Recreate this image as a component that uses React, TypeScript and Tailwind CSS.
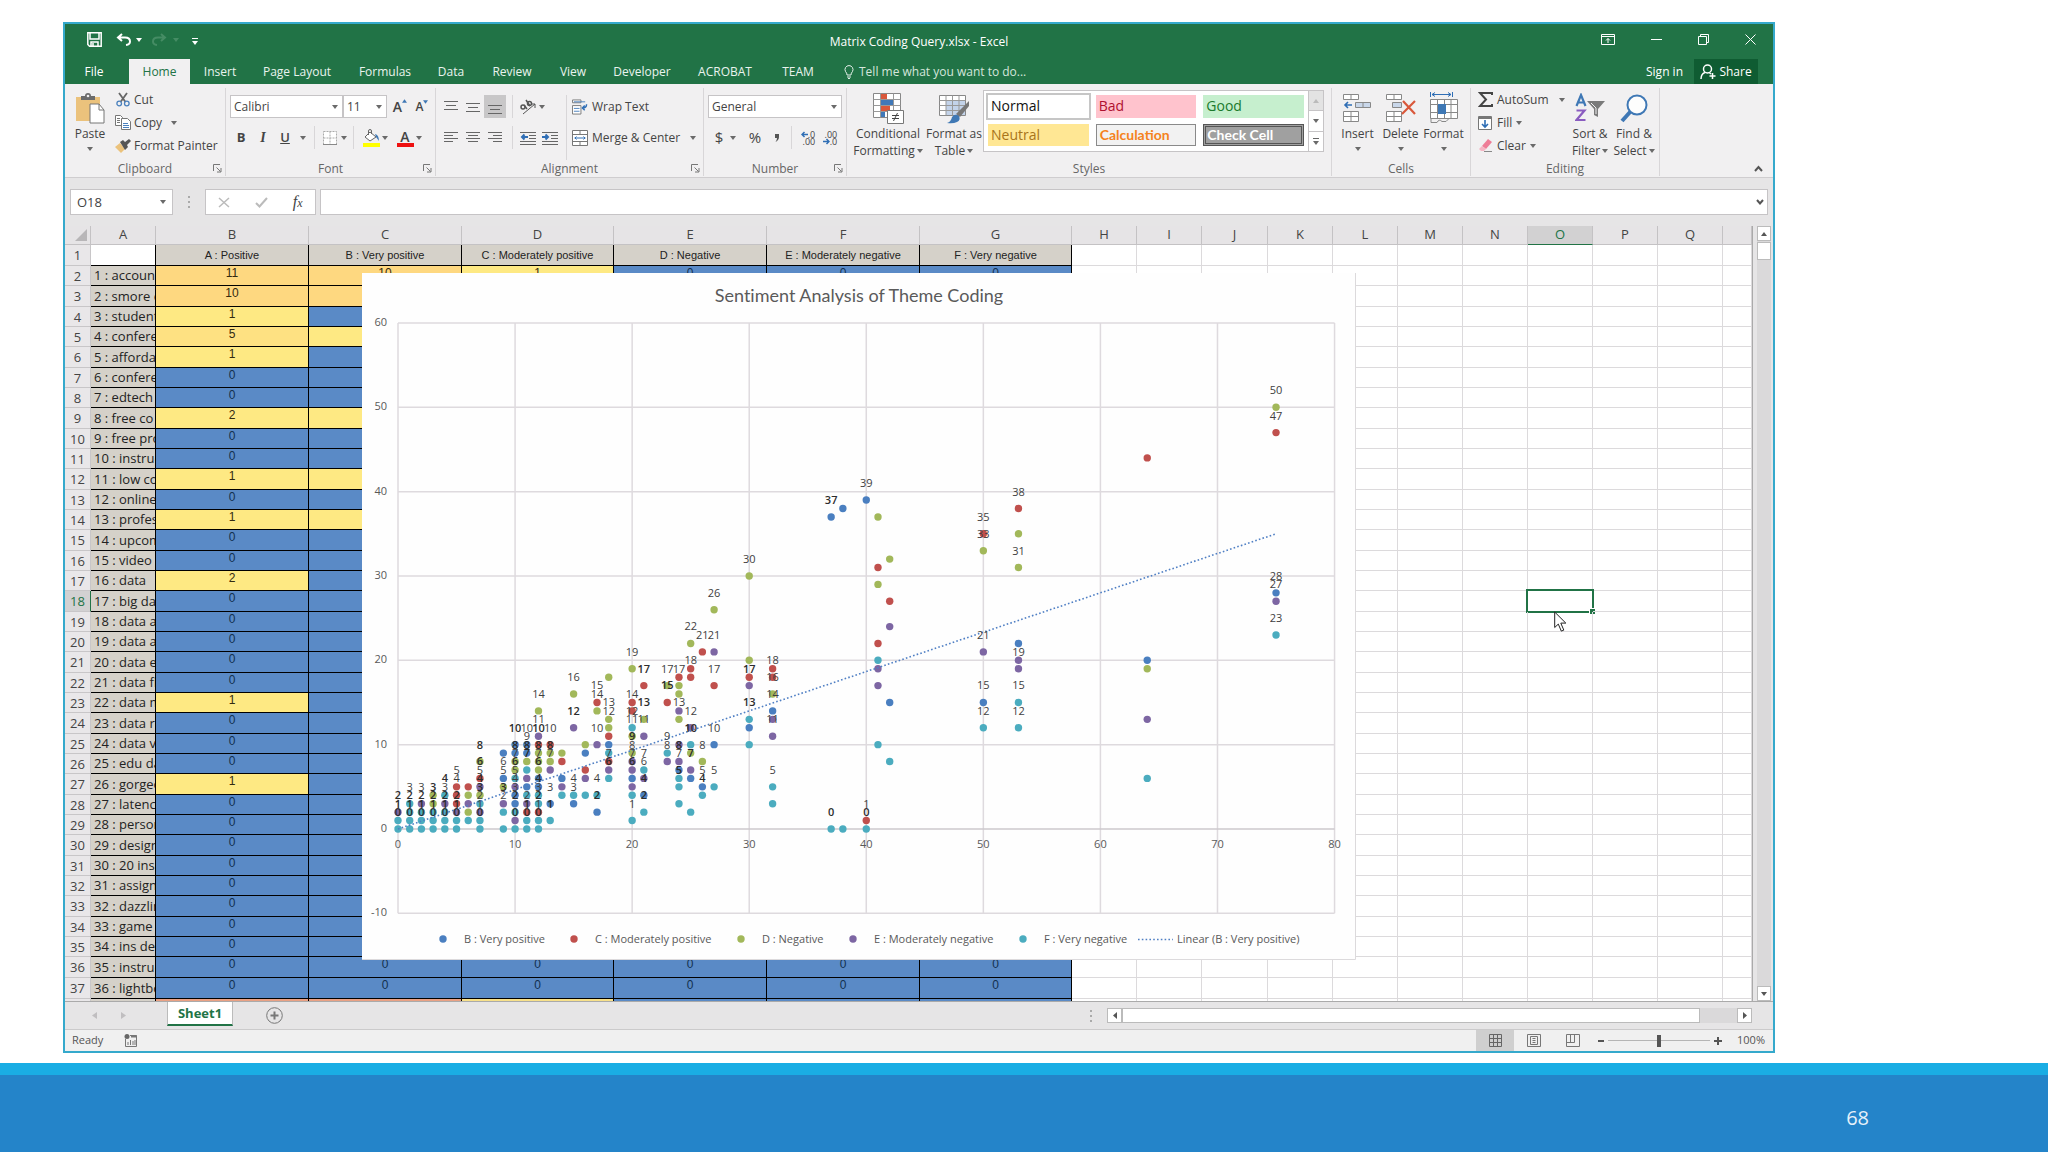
import React from "react";

/* ---------- data ---------- */

const RED = "#c0504d";
const GREEN = "#a2b85a";
const PURPLE = "#7d66a3";
const TEAL = "#4bacbf";
const BLUE = "#4a7fc0";

const COLORS: Record<string, string> = { R: RED, G: GREEN, P: PURPLE, T: TEAL, B: BLUE };

type Column = { x: number; dots: string; labels?: number[]; strong?: number[] };

const COLUMNS: Column[] = [
  { x: 0, dots: "T0 T1 P2", labels: [0, 1, 2], strong: [0, 1, 2] },
  { x: 1, dots: "T0 T1 T2 T3", labels: [0, 1, 2, 3], strong: [0, 1, 2] },
  { x: 2, dots: "T0 T1 T2 P3", labels: [0, 1, 2, 3], strong: [0, 1, 2] },
  { x: 3, dots: "T0 T1 T2 G3 G4", labels: [0, 1, 2, 3], strong: [0, 1, 2, 3] },
  { x: 4, dots: "T0 T1 T2 P3 T4", labels: [0, 1, 2, 3, 4], strong: [0, 1, 2, 4] },
  { x: 5, dots: "T0 T1 P2 R3 R4 R5", labels: [0, 1, 2, 4, 5], strong: [0, 1, 2] },
  { x: 6, dots: "T1 G2 P3 G4 R5" },
  { x: 7, dots: "T0 T1 P2 T3 G4 P5 R6 G8", labels: [0, 1, 2, 3, 4, 5, 6, 8], strong: [0, 3, 4, 6, 8] },
  { x: 9, dots: "T0 T2 P3 G5 B6 B9", labels: [2, 3, 5, 6], strong: [3] },
  { x: 10, dots: "T0 P1 T2 B3 B4 P5 T6 G7 G8 B9 B10", labels: [0, 2, 3, 4, 5, 6, 7, 8, 10], strong: [0, 2, 6, 8, 10] },
  { x: 11, dots: "T0 T1 R2 P3 T4 B5 P6 T7 G8 B9 B10", labels: [0, 1, 2, 7, 8, 9, 10], strong: [0, 1, 7, 8] },
  { x: 12, dots: "T0 T1 R2 T3 T4 B5 B6 G7 G8 G9 R10 P11 G14", labels: [0, 1, 2, 3, 4, 6, 7, 8, 10, 11, 14], strong: [0, 2, 4, 6, 8, 10] },
  { x: 13, dots: "T1 B3 P7 G8 G9 R10", labels: [1, 3, 7, 8, 10], strong: [1, 8] },
  { x: 14, dots: "T4 P5 B6 R8 G9" },
  { x: 15, dots: "B3 T4 P12 G16", labels: [3, 4, 12, 16], strong: [12] },
  { x: 16, dots: "T4 P6 R7 B9 G10" },
  { x: 17, dots: "B2 T4 P10 G14 R15", labels: [2, 4, 10, 14, 15], strong: [2] },
  { x: 18, dots: "T6 P7 R8 T9 B10 R11 G12 G13 G18", labels: [6, 7, 12, 13], strong: [6] },
  { x: 20, dots: "T1 T4 P5 B6 P7 P8 G9 G11 T12 R14 R15 G19", labels: [1, 6, 7, 8, 9, 11, 12, 14, 19], strong: [6, 9] },
  { x: 21, dots: "T2 B4 P6 T7 P11 G13 R17", labels: [2, 4, 6, 7, 11, 13, 17], strong: [2, 4, 13, 17] },
  { x: 23, dots: "P8 T9 R15 G17", labels: [8, 9, 15, 17], strong: [15] },
  { x: 24, dots: "T3 T5 T6 B7 P8 P10 G13 P14 G16 G17 R18", labels: [5, 7, 8, 13, 17], strong: [5, 8] },
  { x: 25, dots: "T2 B6 P7 G9 T10 P12 R18 R19 G22", labels: [7, 10, 12, 18, 22], strong: [7, 10] },
  { x: 26, dots: "T4 B5 G8 R21", labels: [4, 5, 8, 21], strong: [4] },
  { x: 27, dots: "T5 B10 P21 R17 G26", labels: [5, 10, 17, 21, 26] },
  { x: 30, dots: "T10 B12 T13 P17 R18 G20 G30", labels: [13, 17, 30], strong: [13, 17] },
  { x: 32, dots: "T3 T5 P11 P13 B14 G16 R18 R19", labels: [5, 11, 14, 16, 18] },
  { x: 37, dots: "T0 B37", labels: [0, 37], strong: [0, 37] },
  { x: 38, dots: "T0 B38" },
  { x: 40, dots: "T0 R1 B39", labels: [0, 1, 39], strong: [0] },
  { x: 41, dots: "T10 P17 P19 T20 R22 G29 R31 G37" },
  { x: 42, dots: "T8 B15 P24 R27 G32" },
  { x: 50, dots: "T12 B15 P21 G33 R35", labels: [12, 15, 21, 33, 35] },
  { x: 53, dots: "T12 T15 P19 P20 B22 G31 G35 R38", labels: [12, 15, 19, 31, 38] },
  { x: 64, dots: "T6 P13 G19 B20 R44" },
  { x: 75, dots: "T23 P27 B28 R47 G50", labels: [23, 27, 28, 47, 50] },
];

const THEMES = [
  "accounts", "smore cost", "students", "conference", "affordable", "conferences", "edtech", "free co",
  "free products", "instruction", "low cost", "online", "professional", "upcoming", "video", "data", "big data",
  "data analysis", "data analytics", "data export", "data files", "data mining", "data report", "data viz",
  "edu data", "gorgeous", "latency", "personal", "design", "20 ins", "assignment", "dazzling", "game",
  "ins design", "instruct", "lightbox",
];

const POSITIVE: Record<number, number> = { 2: 11, 3: 10, 4: 1, 5: 5, 6: 1, 9: 2, 12: 1, 14: 1, 17: 2, 23: 1, 27: 1 };
const VERY_POSITIVE: Record<number, number> = { 2: 10, 3: 10, 5: 1, 9: 1, 12: 1, 14: 1 };

const LETTERS = ["A", "B", "C", "D", "E", "F", "G", "H", "I", "J", "K", "L", "M", "N", "O", "P", "Q", ""];
const WIDTHS = [
  "w-[65px]", "w-[153px]", "w-[153px]", "w-[152px]", "w-[153px]", "w-[153px]", "w-[152px]",
  "w-[65px]", "w-[65px]", "w-[66px]", "w-[65px]", "w-[65px]", "w-[65px]", "w-[65px]", "w-[65px]", "w-[65px]", "w-[65px]", "",
];
const HEADINGS = ["A : Positive", "B : Very positive", "C : Moderately positive", "D : Negative", "E : Moderately negative", "F : Very negative"];

function fill(v: number) {
  if (v >= 10) return "bg-[#fed880]";
  if (v >= 5) return "bg-[#fee182]";
  if (v > 0) return "bg-[#fee983]";
  return "bg-[#5a8ac6]";
}

/* ---------- small pieces ---------- */

function Caret({ className = "text-[#6a6a6a]" }: { className?: string }) {
  return (
    <svg width="6" height="4" viewBox="0 0 6 4" className={`shrink-0 ${className}`} aria-hidden="true">
      <path d="M0 0h6L3 4z" fill="currentColor" />
    </svg>
  );
}

function Launcher({ name }: { name: string }) {
  return (
    <button aria-label={name} className="absolute right-[3px] bottom-[3px]">
      <svg width="9" height="9" viewBox="0 0 9 9" fill="none" stroke="#777" aria-hidden="true">
        <path d="M.5 7V.5H7M3.500 3.500L7.500 7.500M8 4v4H4" />
      </svg>
    </button>
  );
}

function Group({ label, width, launcher, children }: { label: string; width: string; launcher?: boolean; children: React.ReactNode }) {
  return (
    <section aria-label={label} className={`relative mt-1 mb-px flex shrink-0 flex-col border-r border-[#d8d6d8] ${width}`}>
      <div className="flex flex-1">{children}</div>
      <div className="h-[16px] text-center text-[12px] leading-[18px] text-[#666]">{label}</div>
      {launcher && <Launcher name={`${label} settings`} />}
    </section>
  );
}

function Sep() {
  return <span className="h-[23px] w-px shrink-0 bg-[#d8d6d8]" />;
}

function BigButton({ icon, lines, width, below }: { icon: React.ReactNode; lines: string[]; width: string; below?: boolean }) {
  return (
    <button className={`flex shrink-0 flex-col items-center pt-[3px] ${width}`}>
      <span className="flex h-[34px] items-center">{icon}</span>
      {lines.map((l, i) => (
        <span key={l} className="flex h-[17px] items-center gap-[2px] whitespace-nowrap text-[12px] leading-[17px]">
          {l}
          {!below && i === lines.length - 1 && <Caret />}
        </span>
      ))}
      {below && <span className="flex h-[14px] items-center"><Caret /></span>}
    </button>
  );
}

function SmallButton({ icon, label, caret, gap = "gap-1" }: { icon: React.ReactNode; label: string; caret?: boolean; gap?: string }) {
  return (
    <button className={`flex h-[23px] items-center whitespace-nowrap text-[12px] ${gap}`}>
      <span className="flex w-4 justify-center">{icon}</span>
      <span>{label}</span>
      {caret && <Caret />}
    </button>
  );
}

function Lines({ spec, blue }: { spec: [number, number, number][]; blue?: string }) {
  return (
    <svg width="16" height="14" viewBox="0 0 16 14" aria-hidden="true">
      {spec.map(([x, y, w]) => <rect key={`${x}-${y}`} x={x} y={y} width={w} height="1" fill="#666" />)}
      {blue && <path d={blue} fill="none" stroke="#2f6eb5" strokeWidth="2" />}
    </svg>
  );
}

function Tool({ label, children, className = "" }: { label: string; children: React.ReactNode; className?: string }) {
  return (
    <button aria-label={label} className={`flex h-[23px] w-[22px] shrink-0 items-center justify-center ${className}`}>
      {children}
    </button>
  );
}

/* ---------- icons ---------- */

const PasteIcon = () => (
  <svg width="30" height="31" viewBox="0 0 30 31" aria-hidden="true">
    <path d="M1 4h24v24H1z" fill="#ebc27c" />
    <path d="M6 7V3h4a3 3 0 0 1 6 0h4v4z" fill="#6b6b6b" />
    <circle cx="13" cy="3" r="1.300" fill="#f1f0f1" />
    <path d="M15 11h9l5 6v13H15z" fill="#fff" stroke="#777" />
    <path d="M24 11v6h5" fill="none" stroke="#777" />
  </svg>
);
const CutIcon = () => (
  <svg width="14" height="15" viewBox="0 0 14 15" fill="none" aria-hidden="true">
    <path d="M3 1l6.500 9M11 1L4.500 10" stroke="#666" strokeWidth="1.800" />
    <circle cx="3.200" cy="11.500" r="2.300" stroke="#4a80bd" strokeWidth="1.300" />
    <circle cx="10.800" cy="11.500" r="2.300" stroke="#4a80bd" strokeWidth="1.300" />
  </svg>
);
const CopyIcon = () => (
  <svg width="16" height="15" viewBox="0 0 16 15" fill="#fff" stroke="#777" aria-hidden="true">
    <path d="M.5.5h5l2 2v8h-7z" />
    <path d="M6.500 3.500h6l3 3v8h-9z" />
    <path d="M2 3.500h3M2 5.500h3M2 7.500h3" />
    <path d="M8 8.500h5M8 10.500h6M8 12.500h6" stroke="#4a80bd" />
  </svg>
);
const PainterIcon = () => (
  <svg width="16" height="14" viewBox="0 0 16 14" aria-hidden="true">
    <path d="M0 8l5-4 5 6-4 4z" fill="#ebc27c" />
    <path d="M5 3l3-2 2 2 4-3 2 2-4 4 1 2-3 3z" fill="#555" />
  </svg>
);
const BorderIcon = () => (
  <svg width="14" height="14" viewBox="0 0 14 14" fill="#fff" stroke="#aaa" aria-hidden="true">
    <path d="M.5.5h13v13H.5zM7 .5v13M.5 7h13" strokeDasharray="2 1" />
    <path d="M0 13.500h14" stroke="#888" />
  </svg>
);
const BucketIcon = () => (
  <svg width="17" height="18" viewBox="0 0 17 18" aria-hidden="true">
    <path d="M7 3l6 5-6 4-5-4z" fill="#fff" stroke="#666" />
    <path d="M5.500 6V2a1.500 1.500 0 0 1 3 0v3" fill="none" stroke="#666" />
    <path d="M12 5q4 1 4 7l-3-4z" fill="#3f78b5" />
    <rect x="0" y="14" width="17" height="4" fill="#ffff00" />
  </svg>
);
const WrapIcon = () => (
  <svg width="17" height="16" viewBox="0 0 17 16" fill="none" stroke="#777" aria-hidden="true">
    <path d="M.5.500h9v3h-9zM.5 6.500h9v9h-9z" fill="#fff" />
    <path d="M2 2.500h12" stroke="#4a80bd" />
    <path d="M2 9.500h6M2 12.500h6" stroke="#4a80bd" />
    <path d="M15.500 5q0 4-4 4M13.500 6.500L11 9l2.500 2.500" stroke="#2f6eb5" strokeWidth="1.500" />
  </svg>
);
const MergeIcon = () => (
  <svg width="16" height="16" viewBox="0 0 16 16" fill="none" stroke="#777" aria-hidden="true">
    <path d="M.5.500h15v15H.5zM.5 4.500h15M.5 11.500h15M8 .5v4M8 11.500v4" fill="#fff" />
    <path d="M2.500 8h11M4.500 6.500L3 8l1.500 1.500M11.500 6.500L13 8l-1.500 1.500" stroke="#2f6eb5" />
  </svg>
);
const CondIcon = () => (
  <svg width="31" height="31" viewBox="0 0 31 31" aria-hidden="true">
    <path d="M.5.500h27v24H.5z" fill="#fff" stroke="#888" />
    <path d="M.5 6.500h27M.5 12.500h27M.5 18.500h27M7.500.5v24M20.500.5v24" stroke="#999" />
    <path d="M8 1h6v5H8zM8 13h9v5H8z" fill="#d9583b" />
    <path d="M8 7h12v5H8zM8 19h4v5H8z" fill="#4078b8" />
    <path d="M14.500 17.500h16v13h-16z" fill="#fff" stroke="#777" />
    <path d="M19 22.500h7M19 25.500h7M24.500 20l-4 8" stroke="#444" fill="none" />
  </svg>
);
const TableIcon = () => (
  <svg width="31" height="31" viewBox="0 0 31 31" aria-hidden="true">
    <path d="M.5 2.500h26v20H.5z" fill="#fff" stroke="#888" />
    <path d="M7 8h19v14H7z" fill="#c3d3ea" />
    <path d="M.5 7.500h26M.5 12.500h26M.5 17.500h26M7 2.500v20M13.500 2.500v20M20 2.500v20" stroke="#999" />
    <path d="M30 8v5l-9 11-4-3z" fill="#777" />
    <path d="M8 30q4-1 5-6 3-4 7-1 2 4-2 6-4 2-10 1z" fill="#3f78b5" />
  </svg>
);
const InsertIcon = ({ del }: { del?: boolean }) => (
  <svg width="30" height="30" viewBox="0 0 30 30" fill="#fff" stroke="#888" aria-hidden="true">
    <path d="M.5 1.500h15v5H.5zM8 1.500v5M.5 18.500h15v10H.5zM8 18.500v10M.5 23.500h15" />
    {del ? (
      <>
        <path d="M6.500 9.500h9v5h-9z" fill="#c9d7ea" />
        <path d="M17 8l12 13M29 8L16 21" stroke="#d9583b" strokeWidth="2.200" />
      </>
    ) : (
      <>
        <path d="M12.500 9.500h15v5h-15zM20 9.500v5" fill="#c9d7ea" />
        <path d="M9 12H2M5 9l-3 3 3 3" fill="none" stroke="#2f6eb5" strokeWidth="1.600" />
      </>
    )}
  </svg>
);
const FormatIcon = () => (
  <svg width="30" height="32" viewBox="0 0 30 32" fill="none" stroke="#888" aria-hidden="true">
    <path d="M1.500 0v5M23.500 0v5M3 2.500h19M6 .5l-3 2 3 2M19 .5l3 2-3 2" stroke="#2f6eb5" />
    <path d="M1.500 7.500h27v19h-27z" fill="#fff" />
    <path d="M1.500 12.500h27M1.500 20.500h27M8.500 7.500v19M15.500 7.500v19M22 7.500v19M2 26.500v4h6q2-4 5-1h4l3-3" />
    <rect x="9" y="12" width="8" height="10" fill="#3f78b5" stroke="none" />
  </svg>
);
const SortIcon = () => (
  <svg width="30" height="30" viewBox="0 0 30 30" fill="none" aria-hidden="true">
    <path d="M1.500 13L6 2l4.500 11M3 9.500h6" stroke="#3f78b5" strokeWidth="2.200" />
    <path d="M1.500 17.500h8L1.500 27h9" stroke="#8a5cc0" strokeWidth="2.200" />
    <path d="M12 8h18l-7 8v8l-4-2v-6z" fill="#7a7a7a" />
    <path d="M16 10l5 5v6" stroke="#f1f0f1" />
  </svg>
);
const FindIcon = () => (
  <svg width="28" height="29" viewBox="0 0 28 29" fill="none" aria-hidden="true">
    <path d="M11 17L2 27" stroke="#3f78b5" strokeWidth="4" />
    <circle cx="17" cy="11" r="9.500" stroke="#3f78b5" strokeWidth="2" fill="#fdfdfd" />
  </svg>
);

/* ---------- chart ---------- */

const px = (x: number) => 36 + x * 11.707;
const py = (y: number) => 556 - y * 8.434;

const LEGEND: [number, string, string][] = [
  [81, BLUE, "B : Very positive"],
  [212, RED, "C : Moderately positive"],
  [379, GREEN, "D : Negative"],
  [491, PURPLE, "E : Moderately negative"],
  [661, TEAL, "F : Very negative"],
];

function Chart() {
  return (
    <svg width="994" height="687" viewBox="0 0 994 687" role="img" aria-label="Sentiment Analysis of Theme Coding" className="block font-['Open_Sans',sans-serif]">
      <rect width="994" height="687" fill="#fefefe" />
      <path d="M993.500 0V686.500H0" fill="none" stroke="#dcdadc" />
      <text x="497" y="29" textAnchor="middle" className="fill-[#5a5a5a] font-['Lato',sans-serif] text-[18px] [font-variant-ligatures:none]">Sentiment Analysis of Theme Coding</text>
      {[0, 10, 20, 30, 40, 50, 60, 70, 80].map((v) => (
        <g key={v}>
          <line x1={px(v)} x2={px(v)} y1={py(60)} y2={py(-10)} stroke="#dedade" strokeWidth="1.500" />
          <text x={px(v)} y="575" textAnchor="middle" className="fill-[#595959] text-[11px]">{v}</text>
        </g>
      ))}
      {[-10, 0, 10, 20, 30, 40, 50, 60].map((v) => (
        <g key={v}>
          <line x1={px(0)} x2={px(80)} y1={py(v)} y2={py(v)} stroke={v === 0 ? "#cdc9cd" : "#dedade"} strokeWidth="1.500" />
          <text x="25" y={py(v) + 3} textAnchor="end" className="fill-[#595959] text-[11px]">{v}</text>
        </g>
      ))}
      {COLUMNS.map((c) =>
        c.dots.split(" ").map((d) => (
          <circle key={`${c.x}${d}`} cx={px(c.x)} cy={py(Number(d.slice(1)))} r="3.700" fill={COLORS[d[0]]} />
        )),
      )}
      <line x1={px(0)} y1={py(0)} x2={px(75)} y2={py(35)} stroke="#4f7fc4" strokeWidth="1.600" strokeDasharray="1.600 2.200" />
      {COLUMNS.map((c) =>
        (c.labels ?? []).map((v) => (
          <text
            key={`${c.x}-${v}`}
            x={px(c.x)}
            y={py(v) - 13}
            textAnchor="middle"
            className={c.strong?.includes(v) ? "fill-[#2c2c2c] text-[11px] font-semibold" : "fill-[#404040] text-[11px]"}
          >
            {v}
          </text>
        )),
      )}
      {LEGEND.map(([x, color, label]) => (
        <g key={label}>
          <circle cx={x} cy="666" r="3.700" fill={color} />
          <text x={x + 21} y="670" className="fill-[#595959] text-[11px]">{label}</text>
        </g>
      ))}
      <line x1="776" x2="811" y1="666.500" y2="666.500" stroke="#4f7fc4" strokeWidth="1.600" strokeDasharray="1.600 2.200" />
      <text x="815" y="670" className="fill-[#595959] text-[11px]">Linear (B : Very positive)</text>
    </svg>
  );
}

/* ---------- sheet ---------- */

function Sheet() {
  return (
    <div className="relative min-w-0 flex-1 overflow-hidden border-r border-[#aaa] bg-white">
      <table className="w-full table-fixed border-separate border-spacing-0">
        <colgroup>
          <col className="w-[26px]" />
          {WIDTHS.map((w, i) => <col key={i} className={w} />)}
        </colgroup>
        <thead>
          <tr>
            <th className="h-[19px] border-r border-b border-[#c4c2c4] bg-[#e6e4e6] p-0">
              <svg width="12" height="12" viewBox="0 0 12 12" className="ml-auto mr-[3px]" aria-hidden="true"><path d="M12 0v12H0z" fill="#b8b6b8" /></svg>
            </th>
            {LETTERS.map((l, i) => (
              <th
                key={i}
                scope="col"
                className={`h-[19px] border-r border-b p-0 text-[13px] leading-[16px] font-normal align-top ${
                  l === "O" ? "border-r-[#c4c2c4] border-b-[#217346] bg-[#d2d1d2] text-[#217346]" : "border-[#c4c2c4] bg-[#e6e4e6] text-[#444]"
                }`}
              >
                {l}
              </th>
            ))}
          </tr>
        </thead>
        <tbody>
          <tr>
            <th scope="row" className="h-[21px] border-r border-b border-[#c8c6c8] bg-[#e9e7e9] p-0 text-[13px] leading-[19px] font-normal text-[#444]">1</th>
            <td className="border-r border-b border-black bg-white p-0" />
            {HEADINGS.map((h) => (
              <td key={h} className="border-r border-b border-black bg-[#d5d1c9] p-0 text-center font-['Liberation_Sans',sans-serif] text-[11px] leading-[20px] whitespace-nowrap text-[#222]">{h}</td>
            ))}
            {WIDTHS.slice(7).map((_, i) => <td key={i} className="border-r border-b border-[#dcdadc] p-0" />)}
          </tr>
          {THEMES.map((name, i) => {
            const row = i + 2;
            const h = i % 3 === 1 || i === 35 ? "h-[21px]" : "h-[20px]";
            const selected = row === 18;
            const values = [
              POSITIVE[row] ?? 0,
              VERY_POSITIVE[row] ?? 0,
              row === 2 ? 1 : 0, 0, 0, 0,
            ];
            return (
              <tr key={row}>
                <th
                  scope="row"
                  className={`${h} border-r border-b p-0 text-[13px] leading-[18px] font-normal ${
                    selected ? "border-r-[#217346] border-b-[#c8c6c8] bg-[#d2d1d2] text-[#217346]" : "border-[#c8c6c8] bg-[#e9e7e9] text-[#444]"
                  }`}
                >
                  {row}
                </th>
                <td className="overflow-hidden border-r border-b border-black bg-[#d5d1c9] p-0 pl-[3px] text-[13px] leading-[19px] whitespace-nowrap text-[#222]">
                  {`${i + 1} : ${name}`}
                </td>
                {values.map((v, c) => (
                  <td key={c} className={`border-r border-b border-black p-0 text-center align-top font-['Liberation_Sans',sans-serif] text-[12px] leading-[14px] ${fill(v)} ${v ? "text-[#332a10]" : "text-[#12304f]"}`}>
                    {v}
                  </td>
                ))}
                {WIDTHS.slice(7).map((_, c) => (
                  <td key={c} className="relative border-r border-b border-[#dcdadc] p-0">
                    {selected && c === 7 && (
                      <>
                        <span className="absolute -inset-[2px] border-2 border-[#217346]" />
                        <span className="absolute -right-[3px] -bottom-[3px] size-[6px] border-t border-l border-white bg-[#217346]" />
                        <svg width="13" height="21" viewBox="0 0 13 21" className="absolute top-[20px] left-[26px] z-10" aria-hidden="true">
                          <path d="M.7 1v15.500l3.600-3.400 3 7 2.500-1-3-7h5z" fill="#fff" stroke="#222" />
                        </svg>
                      </>
                    )}
                  </td>
                ))}
              </tr>
            );
          })}
          <tr aria-hidden="true">
            <td className="h-[2px] border-r border-[#c8c6c8] bg-[#e9e7e9] p-0" />
            <td className="border-r border-black bg-[#d5d1c9] p-0" />
            <td className="border-r border-black bg-[#e9a184] p-0" />
            <td className="border-r border-black bg-[#e9a184] p-0" />
            <td className="border-r border-black bg-[#f7e08a] p-0" />
            <td className="border-r border-black bg-[#5a8ac6] p-0" />
            <td className="border-r border-black bg-[#5a8ac6] p-0" />
            <td className="border-r border-black bg-[#5a8ac6] p-0" />
            {WIDTHS.slice(7).map((_, c) => <td key={c} className="border-r border-[#dcdadc] p-0" />)}
          </tr>
        </tbody>
      </table>
      <div className="absolute top-[47px] left-[297px]"><Chart /></div>
    </div>
  );
}

/* ---------- ribbon ---------- */

const TABS: [string, string][] = [
  ["Insert", "w-[60px]"], ["Page Layout", "w-[94px]"], ["Formulas", "w-[82px]"], ["Data", "w-[50px]"], ["Review", "w-[72px]"],
  ["View", "w-[50px]"], ["Developer", "w-[88px]"], ["ACROBAT", "w-[78px]"], ["TEAM", "w-[68px]"],
];

function Combo({ label, value, width }: { label: string; value: string; width: string }) {
  return (
    <span className={`relative flex shrink-0 items-center ${width}`}>
      <select aria-label={label} className="h-[23px] w-full appearance-none border border-[#c6c4c6] bg-white pl-[3px] text-[12px] text-[#444]">
        <option>{value}</option>
      </select>
      <span className="pointer-events-none absolute right-[5px]"><Caret /></span>
    </span>
  );
}

function Ribbon() {
  return (
    <div className="flex h-[94px] border-b border-[#cfcdcf] bg-[#f1f0f1] text-[#444]">
      <Group label="Clipboard" width="w-[161px]" launcher>
        <BigButton icon={<PasteIcon />} lines={["Paste"]} width="w-[50px]" below />
        <div className="flex flex-col">
          <SmallButton icon={<CutIcon />} label="Cut" gap="gap-[3px]" />
          <SmallButton icon={<CopyIcon />} label="Copy" caret gap="gap-[3px] [&>svg]:ml-[6px]" />
          <SmallButton icon={<PainterIcon />} label="Format Painter" gap="gap-[3px]" />
        </div>
      </Group>

      <Group label="Font" width="w-[210px]" launcher>
        <div className="flex flex-col gap-2 pt-[7px] pl-[4px]">
          <div className="flex items-center">
            <Combo label="Font" value="Calibri" width="w-[113px]" />
            <Combo label="Font size" value="11" width="w-[44px]" />
            <Tool label="Increase font size" className="ml-[2px]"><span className="flex text-[14px] font-semibold">A<svg width="5" height="4" viewBox="0 0 6 4" className="mt-[3px]"><path d="M0 4h6L3 0z" fill="#3f78b5" /></svg></span></Tool>
            <Tool label="Decrease font size"><span className="flex text-[12px] font-semibold">A<svg width="5" height="4" viewBox="0 0 6 4" className="mt-[2px]"><path d="M0 0h6L3 4z" fill="#3f78b5" /></svg></span></Tool>
          </div>
          <div className="flex items-center">
            <Tool label="Bold"><b className="text-[13px]">B</b></Tool>
            <Tool label="Italic"><i className="font-['Liberation_Serif',serif] text-[14px] font-bold">I</i></Tool>
            <Tool label="Underline"><span className="text-[13px] font-semibold underline">U</span></Tool>
            <Tool label="Underline options" className="-ml-1 w-[18px]"><Caret /></Tool>
            <Sep />
            <Tool label="Borders" className="ml-1"><BorderIcon /></Tool>
            <Caret />
            <span className="w-[6px]" />
            <Sep />
            <Tool label="Fill colour" className="ml-[6px]"><BucketIcon /></Tool>
            <Caret />
            <Tool label="Font colour" className="ml-[6px]">
              <span className="flex h-[18px] w-[17px] justify-center border-b-4 border-[#ee1111] text-[14px] leading-[15px] font-semibold">A</span>
            </Tool>
            <Caret />
          </div>
        </div>
      </Group>

      <Group label="Alignment" width="w-[268px]" launcher>
        <div className="flex gap-[5px] pt-[7px] pl-[4px]">
          <div className="flex flex-col gap-2">
            <div className="flex items-center">
              <Tool label="Top align"><Lines spec={[[1, 1, 14], [3, 5, 10], [1, 9, 14]]} /></Tool>
              <Tool label="Middle align"><Lines spec={[[1, 3, 14], [3, 7, 10], [1, 11, 14]]} /></Tool>
              <Tool label="Bottom align" className="bg-[#c8c7c8]"><Lines spec={[[1, 5, 14], [3, 9, 10], [1, 13, 14]]} /></Tool>
              <span className="w-[6px]" />
              <Sep />
              <Tool label="Orientation" className="ml-1">
                <svg width="18" height="16" viewBox="0 0 18 16" fill="none" stroke="#555" aria-hidden="true">
                  <path d="M4 15L16 5M12 5h4v4" />
                  <circle cx="4" cy="8" r="2" strokeWidth="1.500" /><path d="M5 6l3 4M7 1l4 6" strokeWidth="1.500" /><circle cx="10.500" cy="4.500" r="2" strokeWidth="1.500" />
                </svg>
              </Tool>
              <Caret />
            </div>
            <div className="flex items-center">
              <Tool label="Align left"><Lines spec={[[1, 1, 14], [1, 4, 9], [1, 7, 14], [1, 10, 9]]} /></Tool>
              <Tool label="Centre"><Lines spec={[[1, 1, 14], [3, 4, 10], [1, 7, 14], [3, 10, 10]]} /></Tool>
              <Tool label="Align right"><Lines spec={[[1, 1, 14], [6, 4, 9], [1, 7, 14], [6, 10, 9]]} /></Tool>
              <span className="w-[6px]" />
              <Sep />
              <Tool label="Decrease indent" className="ml-1"><Lines spec={[[0, 1, 16], [9, 4, 7], [9, 7, 7], [0, 10, 16], [0, 13, 16]]} blue="M8 6H2M4.500 3.500L2 6l2.500 2.500" /></Tool>
              <Tool label="Increase indent"><Lines spec={[[0, 1, 16], [9, 4, 7], [9, 7, 7], [0, 10, 16], [0, 13, 16]]} blue="M0 6h6M3.500 3.500L6 6 3.500 8.500" /></Tool>
            </div>
          </div>
          <div className="w-px bg-[#d8d6d8]" />
          <div className="flex flex-col gap-2">
            <SmallButton icon={<WrapIcon />} label="Wrap Text" />
            <SmallButton icon={<MergeIcon />} label="Merge & Center" caret gap="gap-1 [&>svg]:ml-[6px]" />
          </div>
        </div>
      </Group>

      <Group label="Number" width="w-[143px]" launcher>
        <div className="flex flex-1 flex-col gap-2 px-[4px] pt-[7px]">
          <Combo label="Number format" value="General" width="w-full" />
          <div className="flex items-center">
            <Tool label="Currency"><span className="text-[15px]">$</span></Tool>
            <Caret />
            <Tool label="Percent" className="ml-2"><span className="text-[15px]">%</span></Tool>
            <Tool label="Comma style"><svg width="6" height="8" viewBox="0 0 6 8"><path d="M1 0h4v3q0 3-3.500 5Q3 6 3 4H1z" fill="#555" /></svg></Tool>
            <span className="w-[3px]" />
            <Sep />
            <Tool label="Increase decimal" className="ml-[5px]">
              <span className="grid text-right text-[9px] leading-[7px]"><span className="flex items-center justify-end"><svg width="7" height="7" viewBox="0 0 7 7" fill="none" stroke="#2f6eb5" strokeWidth="1.500"><path d="M7 3.500H1M3.500 1L1 3.500 3.500 6" /></svg>.0</span><span>.00</span></span>
            </Tool>
            <Tool label="Decrease decimal">
              <span className="grid text-right text-[9px] leading-[7px]"><span>.00</span><span className="flex items-center justify-end"><svg width="7" height="7" viewBox="0 0 7 7" fill="none" stroke="#2f6eb5" strokeWidth="1.500"><path d="M0 3.500h6M3.500 1L6 3.500 3.500 6" /></svg>.0</span></span>
            </Tool>
          </div>
        </div>
      </Group>

      <Group label="Styles" width="w-[485px]">
        <BigButton icon={<CondIcon />} lines={["Conditional", "Formatting"]} width="w-[80px] ml-px" />
        <BigButton icon={<TableIcon />} lines={["Format as", "Table"]} width="w-[52px]" />
        <div className="mt-[2px] ml-[3px] flex h-[62px] w-[341px] border border-[#c6c4c6] bg-white text-[14px] leading-[20px]">
          <div className="grid flex-1 grid-cols-3 grid-rows-2 gap-x-[7px] gap-y-[6px] px-[4px] pt-[4px] pb-[5px]">
            <button className="bg-white pl-[3px] text-left text-[#111] outline-2 outline-[#c6c6c6]">Normal</button>
            <button className="bg-[#ffc3cd] pl-[3px] text-left text-[#b01030]">Bad</button>
            <button className="bg-[#c6efce] pl-[3px] text-left text-[#1a7a2c]">Good</button>
            <button className="bg-[#ffe794] pl-[3px] text-left text-[#a8741a]">Neutral</button>
            <button className="border border-[#8a8a8a] bg-[#f2f2f2] pl-[3px] text-left font-['Lato',sans-serif] leading-[18px] font-bold text-[#f58220]">Calculation</button>
            <button className="border-[3px] border-double border-[#555] bg-[#a0a0a0] pl-px text-left font-['Lato',sans-serif] leading-[14px] font-bold text-white">Check Cell</button>
          </div>
          <div className="flex w-[15px] flex-col border-l border-[#c6c4c6]">
            <button aria-label="Previous styles" className="flex flex-1 items-center justify-center bg-[#e3e3e3]"><Caret className="rotate-180 text-[#bbb]" /></button>
            <button aria-label="Next styles" className="flex flex-1 items-center justify-center border-y border-[#c6c4c6]"><Caret /></button>
            <button aria-label="More styles" className="flex flex-1 flex-col items-center justify-center gap-[2px]"><span className="h-px w-[6px] bg-[#666]" /><Caret /></button>
          </div>
        </div>
      </Group>

      <Group label="Cells" width="w-[139px]">
        <BigButton icon={<InsertIcon />} lines={["Insert"]} width="w-[43px] ml-[4px]" below />
        <BigButton icon={<InsertIcon del />} lines={["Delete"]} width="w-[43px]" below />
        <BigButton icon={<FormatIcon />} lines={["Format"]} width="w-[43px]" below />
      </Group>

      <Group label="Editing" width="w-[189px]">
        <div className="flex w-[95px] flex-col pl-[6px]">
          <SmallButton icon={<svg width="15" height="15" viewBox="0 0 15 15" fill="none" stroke="#444" strokeWidth="2"><path d="M14 3V1H2l6 6.500L2 14h12v-2" /></svg>} label="AutoSum" caret gap="gap-1 [&>svg]:ml-[6px]" />
          <SmallButton icon={<svg width="14" height="14" viewBox="0 0 14 14" fill="#fff" stroke="#777"><path d="M.5.5h13v13H.5z" /><path d="M1 2h12" strokeWidth="2" /><path d="M7 4v7M4 8l3 3 3-3" fill="none" stroke="#2f6eb5" strokeWidth="1.600" /></svg>} label="Fill" caret />
          <SmallButton icon={<svg width="15" height="13" viewBox="0 0 15 13"><path d="M4 7l6-7 4 3-6 7z" fill="#ee7d97" /><path d="M4 7l4 3-2 2H3L1 10z" fill="#f5b6c4" /><path d="M6 12.500h8" stroke="#888" /></svg>} label="Clear" caret />
        </div>
        <BigButton icon={<SortIcon />} lines={["Sort &", "Filter"]} width="w-[48px]" />
        <BigButton icon={<FindIcon />} lines={["Find &", "Select"]} width="w-[40px]" />
      </Group>
      <div className="flex flex-1 items-end justify-end pr-[10px] pb-[5px]">
        <button aria-label="Collapse the ribbon">
          <svg width="9" height="7" viewBox="0 0 9 7" fill="none" stroke="#555" strokeWidth="2"><path d="M1 6l3.500-4L8 6" /></svg>
        </button>
      </div>
    </div>
  );
}

/* ---------- page ---------- */

export default function App() {
  return (
    <div className="flex min-h-screen flex-col bg-white font-['Open_Sans',sans-serif]">
      <main className="mt-[22px] mr-[273px] ml-[63px] border-2 border-[#35a9cc] bg-[#e6e5e6]">
        <header className="bg-[#217346] text-white">
          <div className="grid h-[35px] grid-cols-[1fr_auto_1fr] items-center">
            <div className="flex items-center pb-1 pl-[22px]">
              <button aria-label="Save">
                <svg width="15" height="15" viewBox="0 0 15 15" fill="none" stroke="#fff" strokeWidth="1.500"><path d="M.8.8h13.400v13.400H2.500L.8 12.500zM3 1v6h9V1M4 14v-4h7v4M6 11v3" /></svg>
              </button>
              <button aria-label="Undo" className="ml-[14px]">
                <svg width="15" height="13" viewBox="0 0 15 13" fill="none" stroke="#fff" strokeWidth="2"><path d="M6 1L2 4.500 6 8M2 4.500h7q5 0 5 4 0 3-4 3.500" /></svg>
              </button>
              <Caret className="ml-[5px] text-white" />
              <button aria-label="Redo" className="ml-[10px]">
                <svg width="15" height="13" viewBox="0 0 15 13" fill="none" stroke="#458c64" strokeWidth="2"><path d="M9 1l4 3.500L9 8M13 4.500H6q-5 0-5 4Q1 11.500 5 12" /></svg>
              </button>
              <Caret className="ml-[6px] text-[#458c64]" />
              <button aria-label="Customise toolbar" className="mt-1 ml-[13px] flex flex-col items-center gap-[2px]"><span className="h-px w-[6px] bg-white" /><Caret className="text-white" /></button>
            </div>
            <h1 className="text-[12px]">Matrix Coding Query.xlsx - Excel</h1>
            <div className="flex items-center justify-end gap-9 pr-[17px] pb-1">
              <button aria-label="Ribbon display options"><svg width="14" height="11" viewBox="0 0 14 11" fill="none" stroke="#fff"><path d="M.5.5h13v10H.5zM.5 2.500h13M7 9V4.500M5 6.500l2-2 2 2" /></svg></button>
              <button aria-label="Minimise"><svg width="11" height="11" viewBox="0 0 11 11" stroke="#fff"><path d="M0 5.500h11" /></svg></button>
              <button aria-label="Restore"><svg width="11" height="11" viewBox="0 0 11 11" fill="none" stroke="#fff"><path d="M.5 2.500h8v8h-8zM2.500 2V.5h8v8H9" /></svg></button>
              <button aria-label="Close"><svg width="11" height="11" viewBox="0 0 11 11" stroke="#fff"><path d="M.5.5l10 10M10.500.5l-10 10" /></svg></button>
            </div>
          </div>
          <nav className="flex h-[25px] items-stretch text-[12px] leading-[24px]">
            <button className="mr-[6px] w-[58px]">File</button>
            <button className="w-[61px] bg-[#f1f0f1] text-[#217346]">Home</button>
            {TABS.map(([t, w]) => <button key={t} className={`${w} text-[#eaf3ee]`}>{t}</button>)}
            <button className="ml-[12px] flex items-center gap-[5px] text-[#d5e6dc]">
              <svg width="10" height="14" viewBox="0 0 10 14" fill="none" stroke="#e4f0e9"><path d="M3 10Q3 8 1.500 6.500a4 4 0 1 1 7 0Q7 8 7 10zM3 12h4M4 13.500h2" /></svg>
              Tell me what you want to do...
            </button>
            <span className="flex-1" />
            <button className="mr-[11px]">Sign in</button>
            <button className="mr-[15px] flex w-[64px] items-center justify-center gap-[3px] bg-[#0f5c32]">
              <svg width="16" height="16" viewBox="0 0 16 16" fill="none" stroke="#fff" strokeWidth="1.500"><circle cx="7.500" cy="5" r="4" /><path d="M1 15q0-5 4-6.500M9.500 9l1.500 1M12.500 9v6M9.500 12h6" /></svg>
              Share
            </button>
          </nav>
        </header>

        <Ribbon />

        <div className="flex h-12 items-start pt-[11px] pr-[5px] pl-[5px]">
          <span className="relative flex w-[103px] items-center">
            <input aria-label="Name box" defaultValue="O18" className="h-[26px] w-full border border-[#c6c4c6] bg-white pl-[6px] text-[13px] text-[#444]" />
            <span className="absolute right-[7px]"><Caret /></span>
          </span>
          <span className="flex h-[26px] w-[32px] flex-col items-center justify-center gap-[3px]">
            <i className="size-[2px] bg-[#aaa]" /><i className="size-[2px] bg-[#aaa]" /><i className="size-[2px] bg-[#aaa]" />
          </span>
          <div className="mr-[4px] flex h-[26px] w-[111px] items-center justify-around border border-[#c6c4c6] bg-white">
            <button aria-label="Cancel"><svg width="12" height="11" viewBox="0 0 12 11" stroke="#bbb" strokeWidth="1.500"><path d="M1 1l10 9M11 1L1 10" /></svg></button>
            <button aria-label="Enter"><svg width="13" height="11" viewBox="0 0 13 11" fill="none" stroke="#bbb" strokeWidth="2"><path d="M1 6l3.500 3.500L12 1" /></svg></button>
            <button aria-label="Insert function" className="font-['Liberation_Serif',serif] text-[16px] leading-[16px] text-[#444] italic">f<span className="text-[12px]">x</span></button>
          </div>
          <span className="relative flex flex-1 items-center">
            <input aria-label="Formula bar" className="h-[26px] w-full border border-[#c6c4c6] bg-white px-2 text-[13px]" />
            <svg width="8" height="6" viewBox="0 0 8 6" fill="none" stroke="#555" strokeWidth="2" className="absolute right-[4px]"><path d="M1 1l3 3.500L7 1" /></svg>
          </span>
        </div>

        <div className="flex border-b border-[#aaa]">
          <Sheet />
          <div className="flex w-[20px] flex-col pr-[2px] pl-[4px]">
            <button aria-label="Scroll up" className="flex h-[15px] items-center justify-center border border-[#bbb] bg-white"><Caret className="rotate-180 text-[#555]" /></button>
            <div className="flex-1 bg-[#dad9da]"><div className="mt-px h-[18px] border border-[#bbb] bg-white" /></div>
            <button aria-label="Scroll down" className="flex h-[15px] items-center justify-center border border-[#bbb] bg-white"><Caret className="text-[#555]" /></button>
          </div>
        </div>

        <div className="flex h-[27px] items-start">
          <div className="flex h-[27px] w-[102px] items-center gap-6 pl-[27px]">
            <svg width="5" height="7" viewBox="0 0 5 7"><path d="M5 0v7L0 3.500z" fill="#c0bec0" /></svg>
            <svg width="5" height="7" viewBox="0 0 5 7"><path d="M0 0v7l5-3.500z" fill="#c0bec0" /></svg>
          </div>
          <button className="h-[24px] w-[66px] border-x border-b-2 border-x-[#bbb] border-b-[#217346] bg-white text-[13px] leading-[22px] font-bold text-[#217346]">Sheet1</button>
          <button aria-label="New sheet" className="mt-[5px] ml-[33px]">
            <svg width="17" height="17" viewBox="0 0 17 17" fill="none" stroke="#777"><circle cx="8.500" cy="8.500" r="7.800" /><path d="M8.500 4.500v8M4.500 8.500h8" strokeWidth="2" /></svg>
          </button>
          <div className="mt-[6px] ml-auto mr-[21px] flex items-center">
            <span className="mr-[15px] flex flex-col gap-[3px]"><i className="size-[2px] bg-[#aaa]" /><i className="size-[2px] bg-[#aaa]" /><i className="size-[2px] bg-[#aaa]" /></span>
            <button aria-label="Scroll left" className="flex h-[15px] w-[15px] items-center justify-center border border-[#bbb] bg-white"><svg width="4" height="7" viewBox="0 0 4 7"><path d="M4 0v7L0 3.500z" fill="#555" /></svg></button>
            <div className="flex w-[615px] bg-[#dad9da]"><div className="h-[15px] w-[578px] border border-[#bbb] bg-white" /></div>
            <button aria-label="Scroll right" className="flex h-[15px] w-[15px] items-center justify-center border border-[#bbb] bg-white"><svg width="4" height="7" viewBox="0 0 4 7"><path d="M0 0v7l4-3.500z" fill="#555" /></svg></button>
          </div>
        </div>

        <footer className="flex h-[22px] items-center border-t border-[#cbcacb] bg-[#f0f0f0] text-[11px] text-[#555]">
          <span className="pl-[7px]">Ready</span>
          <svg width="13" height="13" viewBox="0 0 13 13" fill="none" stroke="#777" className="ml-[21px]" aria-hidden="true"><path d="M1.500 5v7.500h11v-11H6M4 11V8M6.500 11V6M9 11V7M11 11V6" /><circle cx="3" cy="2.500" r="2.500" fill="#666" stroke="none" /><path d="M7 2.500h6" strokeWidth="2" /></svg>
          <span className="flex-1" />
          <button aria-label="Normal view" className="flex h-full w-[38px] items-center justify-center bg-[#cfcfcf]"><svg width="13" height="13" viewBox="0 0 13 13" fill="none" stroke="#666"><path d="M.5.5h12v12H.5zM4.500.5v12M8.500.5v12M.5 4.500h12M.5 8.500h12" /></svg></button>
          <button aria-label="Page layout view" className="flex w-[40px] justify-center"><svg width="14" height="13" viewBox="0 0 14 13" fill="none" stroke="#777"><path d="M.5.5h13v12H.5zM3.500 2.500h7v8h-7zM5.500 4.500h3M5.500 6.500h3M5.500 8.500h3" /></svg></button>
          <button aria-label="Page break view" className="flex w-[38px] justify-center"><svg width="14" height="13" viewBox="0 0 14 13" fill="none" stroke="#777"><path d="M.5.5h13v12H.5zM.5 8.500h8v-8M4.500.5v8" /></svg></button>
          <button aria-label="Zoom out" className="ml-[6px] h-[2px] w-[6px] bg-[#555]" />
          <input
            type="range"
            aria-label="Zoom"
            defaultValue={50}
            className="mx-[4px] h-[12px] w-[102px] appearance-none bg-[linear-gradient(#b5b5b5,#b5b5b5)] bg-[length:100%_1px] bg-center bg-no-repeat [&::-webkit-slider-thumb]:h-[12px] [&::-webkit-slider-thumb]:w-[4px] [&::-webkit-slider-thumb]:appearance-none [&::-webkit-slider-thumb]:bg-[#555]"
          />
          <button aria-label="Zoom in"><svg width="8" height="8" viewBox="0 0 8 8" stroke="#555" strokeWidth="2"><path d="M4 0v8M0 4h8" /></svg></button>
          <span className="w-[51px] pr-[8px] text-right">100%</span>
        </footer>
      </main>
      <div className="mt-[10px] h-[12px] bg-[#1aade4]" />
      <div className="flex flex-1 items-center justify-end bg-[#2484c9] pr-[179px] pt-2 text-[20px] text-[#e6f1fa]">68</div>
    </div>
  );
}
